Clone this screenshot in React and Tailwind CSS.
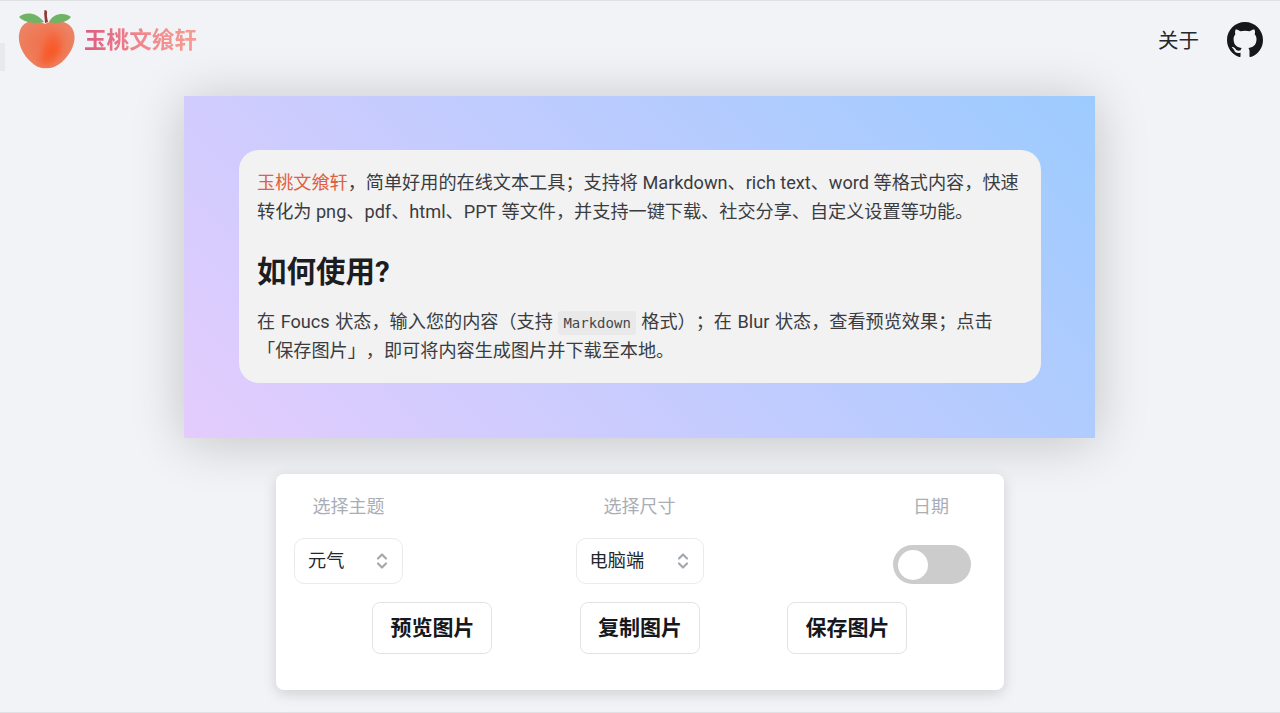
import React from 'react';

const FONT = "font-['Roboto','Noto_Sans_CJK_SC',sans-serif]";

function PeachLogo() {
  return (
    <svg width="60" height="60" viewBox="0 0 60 60" className="shrink-0">
      <defs>
        <radialGradient id="peachBody" cx="0.5" cy="0.5" r="0.6">
          <stop offset="0" stopColor="#f26f4a" />
          <stop offset="0.7" stopColor="#ee7d5c" />
          <stop offset="1" stopColor="#e9866a" />
        </radialGradient>
        <linearGradient id="peachCrease" x1="0" y1="0" x2="0" y2="1">
          <stop offset="0" stopColor="#f8582a" stopOpacity="0.1" />
          <stop offset="0.6" stopColor="#f9541f" stopOpacity="0.9" />
          <stop offset="1" stopColor="#f9541f" stopOpacity="0.5" />
        </linearGradient>
        <filter id="peachSoft" x="-30%" y="-30%" width="160%" height="160%">
          <feGaussianBlur stdDeviation="3" />
        </filter>
        <clipPath id="peachClip">
          <path d="M28 14C20 9 8 10 4 18C-1 28 3 42 14 52C19 57 25 59 29 58C34 59 40 56 45 52C56 42 61 28 55 18C50 10 36 9 28 14Z" />
        </clipPath>
      </defs>
      <path d="M28 14C20 9 8 10 4 18C-1 28 3 42 14 52C19 57 25 59 29 58C34 59 40 56 45 52C56 42 61 28 55 18C50 10 36 9 28 14Z" fill="url(#peachBody)" />
      <g clipPath="url(#peachClip)">
        <path d="M29 17C38 17 46 24 44 36C43 45 38 52 31 56C27 56 24 55 21 52C27 42 33 30 29 17Z" fill="url(#peachCrease)" filter="url(#peachSoft)" />
      </g>
      <path d="M2 7C7 2 19 1 27 12C18 14 8 13 2 7Z" fill="#6fb364" />
      <path d="M32 12C36 3 48 2 54 7C49 13 40 14 32 12Z" fill="#6fb364" />
      <path d="M27.5 0C29.5 0 30.5 1 30 3C29.5 6 30.5 9 31 12L28 13C28 9 26.5 4 27.5 0Z" fill="#8f3a3a" />
    </svg>
  );
}

function GithubMark() {
  return (
    <svg width="36" height="36" viewBox="0 0 16 16" fill="#15171a" className="-mt-[1px]">
      <path d="M8 0C3.58 0 0 3.58 0 8c0 3.54 2.29 6.53 5.47 7.59.4.07.55-.17.55-.38 0-.19-.01-.82-.01-1.49-2.01.37-2.53-.49-2.69-.94-.09-.23-.48-.94-.82-1.13-.28-.15-.68-.52-.01-.53.63-.01 1.08.58 1.23.82.72 1.21 1.87.87 2.33.66.07-.52.28-.87.51-1.07-1.78-.2-3.64-.89-3.64-3.95 0-.87.31-1.59.82-2.15-.08-.2-.36-1.02.08-2.12 0 0 .67-.21 2.2.82.64-.18 1.32-.27 2-.27.68 0 1.36.09 2 .27 1.53-1.04 2.2-.82 2.2-.82.44 1.1.16 1.92.08 2.12.51.56.82 1.27.82 2.15 0 3.07-1.87 3.75-3.65 3.95.29.25.54.73.54 1.48 0 1.07-.01 1.93-.01 2.2 0 .21.15.46.55.38A8.013 8.013 0 0016 8c0-4.42-3.58-8-8-8z" />
    </svg>
  );
}

function Select({ label, value, width }) {
  return (
    <div className="flex flex-col items-center">
      <span className="mt-[1px] text-[18px] leading-[24px] text-[#a9aeb6]">{label}</span>
      <div className={`mt-[19px] h-[46px] ${width} flex items-center justify-between pl-[13px] pr-[13px] bg-white border border-[#eaebed] rounded-[10px]`}>
        <span className="text-[18.2px] text-[#24272b]">{value}</span>
        <svg width="14" height="20" viewBox="0 0 14 20" fill="none" stroke="#a3a8af" strokeWidth="2.2" strokeLinecap="round" strokeLinejoin="round">
          <path d="M3 7.5 7 3.5 11 7.5" />
          <path d="M3 12.5 7 16.5 11 12.5" />
        </svg>
      </div>
    </div>
  );
}

function ActionButton({ children }) {
  return (
    <button className="w-[120px] h-[52px] pt-[2px] pl-[1px] bg-white border border-[#e1e3e6] rounded-[8px] text-[21px] font-bold text-[#15181c]">
      {children}
    </button>
  );
}

export default function App() {
  return (
    <div className={`relative h-[713px] overflow-hidden bg-[#f2f3f6] border-y border-[#dfe1e4] [text-spacing-trim:space-all] ${FONT}`}>
      {/* sliver at the left edge */}
      <div className="absolute left-0 top-[42px] w-[5px] h-[28px] bg-[#e8e9ec]" />

      {/* Header */}
      <header className="h-[79px] flex items-center justify-between pl-[17px] pr-[17px]">
        <div className="flex items-center gap-[7px] -mt-[1px]">
          <PeachLogo />
          <span className="mt-[2px] text-[22.6px] font-bold text-transparent bg-clip-text bg-gradient-to-r from-[#dc5c80] via-[#f0878c] to-[#f49d92]">
            玉桃文飨轩
          </span>
        </div>
        <div className="flex items-center gap-[28px]">
          <a className="text-[20.5px] text-[#24272b] mt-[1px]">关于</a>
          <GithubMark />
        </div>
      </header>

      {/* Preview card */}
      <section className="w-[911px] h-[342px] ml-[184px] mt-[16px] pl-[55px] pr-[54px] py-[54px] bg-[linear-gradient(45deg,#e4ccfd,#9dcbff)] shadow-[0_4px_50px_rgba(0,0,0,0.2)]">
        <div className="h-[233px] pl-[18px] pr-[19px] pt-[18px] bg-[#f2f2f3] rounded-[20px] text-[18.15px] leading-[29px] text-[#3a3c40]">
          <p>
            <span className="text-[#e0603f]">玉桃文飨轩</span>，简单好用的在线文本工具；支持将 Markdown、rich text、word 等格式内容，快速转化为 png、pdf、html、PPT 等文件，并支持一键下载、社交分享、自定义设置等功能。
          </p>
          <h2 className="mt-[26px] text-[29.5px] leading-[40px] font-bold text-[#1b1d20]">如何使用?</h2>
          <p className="mt-[15px] [word-spacing:1px]">
            在 Foucs 状态，输入您的内容（支持{' '}
            <code className="font-['DejaVu_Sans_Mono',monospace] text-[14px] leading-none px-[5px] py-[4px] bg-[#e9e9ea] rounded-[3px] text-[#44474b]">Markdown</code>{' '}
            格式）；在 Blur 状态，查看预览效果；点击「保存图片」，即可将内容生成图片并下载至本地。
          </p>
        </div>
      </section>

      {/* Controls */}
      <section className="w-[728px] h-[216px] ml-[276px] mt-[36px] px-[18px] pt-[20px] bg-white rounded-[8px] shadow-[0_4px_14px_rgba(0,0,0,0.14)]">
        <div className="flex justify-between">
          <Select label="选择主题" value="元气" width="w-[109px]" />
          <Select label="选择尺寸" value="电脑端" width="w-[128px]" />
          <div className="w-[110px] flex flex-col items-center">
            <span className="mt-[1px] text-[18px] leading-[24px] text-[#a9aeb6]">日期</span>
            <div className="mt-[26px] ml-[1px] w-[78px] h-[39px] rounded-full bg-[#cccccc] flex items-center pl-[5px]">
              <div className="w-[30px] h-[30px] rounded-full bg-white" />
            </div>
          </div>
        </div>
        <div className="flex gap-[87.5px] mt-[18px] pl-[78px]">
          <ActionButton>预览图片</ActionButton>
          <ActionButton>复制图片</ActionButton>
          <ActionButton>保存图片</ActionButton>
        </div>
      </section>
    </div>
  );
}
